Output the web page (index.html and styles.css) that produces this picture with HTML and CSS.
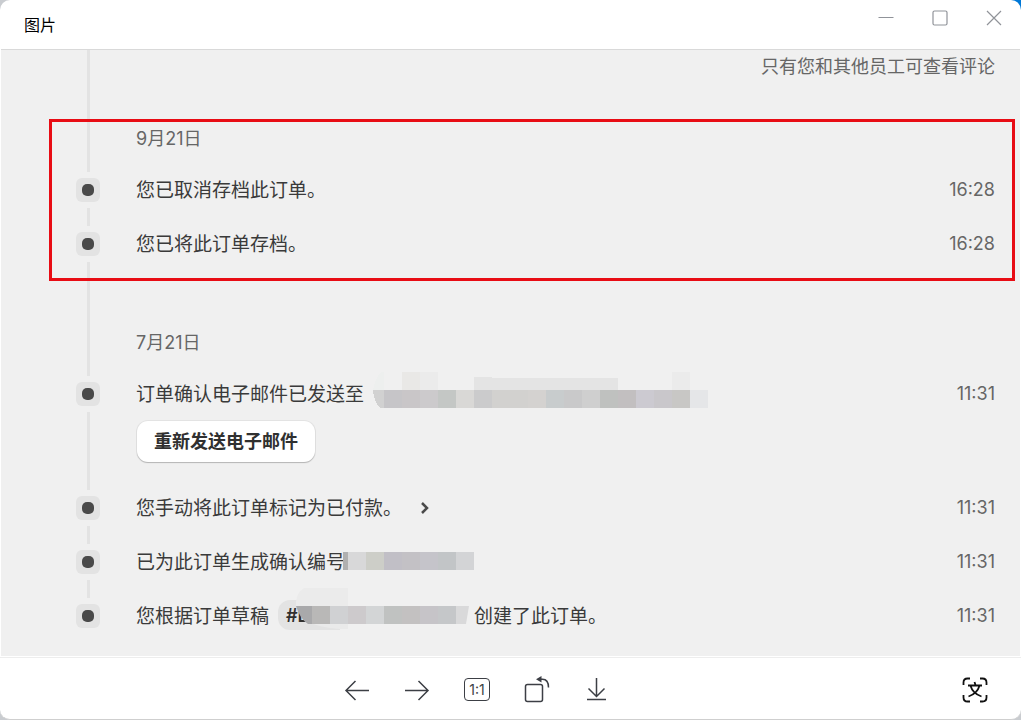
FILE: index.html
```html
<!DOCTYPE html>
<html lang="zh-CN">
<head>
<meta charset="UTF-8">
<meta name="viewport" content="width=device-width, initial-scale=1.0">
<title>图片</title>
<link rel="stylesheet" href="styles.css">
</head>
<body>

<div class="window">
  <header class="titlebar">
    <h1>图片</h1>
    <div class="window-controls">
      <button type="button" aria-label="最小化">
        <svg width="16" height="16" viewBox="0 0 16 16"><path d="M0.500 7.500h15"/></svg>
      </button>
      <button type="button" aria-label="最大化">
        <svg width="16" height="16" viewBox="0 0 16 16"><rect x="1" y="1" width="14" height="14" rx="1.500"/></svg>
      </button>
      <button type="button" aria-label="关闭">
        <svg width="16" height="16" viewBox="0 0 16 16"><path d="M1 1l14 14M15 1L1 15"/></svg>
      </button>
    </div>
  </header>

  <main class="stage">
    <div class="row note">
      <div class="rail"><i class="line"></i></div>
      <p>只有您和其他员工可查看评论</p>
    </div>

    <!-- 9月21日 -->
    <section class="day marked">
      <div class="row date">
        <div class="rail"><i class="line"></i></div>
        <h2>9月21日</h2>
      </div>
      <div class="row event">
        <div class="rail"><i class="dot"></i><i class="line"></i></div>
        <p>您已取消存档此订单。</p>
        <time>16:28</time>
      </div>
      <div class="row event last">
        <div class="rail"><i class="dot"></i><i class="line"></i></div>
        <p>您已将此订单存档。</p>
        <time>16:28</time>
      </div>
    </section>

    <!-- 7月21日 -->
    <section class="day">
      <div class="row date">
        <div class="rail"><i class="line"></i></div>
        <h2>7月21日</h2>
      </div>
      <div class="row event">
        <div class="rail"><i class="dot"></i><i class="line"></i></div>
        <div class="body">
          <p>订单确认电子邮件已发送至</p>
          <svg class="mosaic mosaic-mail" width="335" height="36" viewBox="373 372 335 36" shape-rendering="crispEdges">
            <path fill="#edefee" d="M384 372v18h-11q2-12 8-18z"/>
            <path fill="#e9e8e6" d="M402 372h18v18h-18z"/>
            <path fill="#ebebeb" d="M420 372h18v18h-18zM672 372h18v18h-18z"/>
            <path fill="#e4e4e4" d="M474 377l36 1h108v12H474z"/>
            <path fill="#d1d1d1" d="M373 390h11v18h-4q-6-6-7-18z"/>
            <path fill="#c6c5c8" d="M384 390h18v18h-18z"/>
            <path fill="#c9c6c8" d="M402 390h18v18h-18z"/>
            <path fill="#cccacc" d="M420 390h18v18h-18z"/>
            <path fill="#c4c7c5" d="M438 390h18v18h-18z"/>
            <path fill="#d9d8d6" d="M456 390h18v18h-18z"/>
            <path fill="#cbcbcc" d="M474 390h18v18h-18z"/>
            <path fill="#d2d1cf" d="M492 390h36v18h-36z"/>
            <path fill="#d4d2d0" d="M528 390h18v18h-18z"/>
            <path fill="#c8cccd" d="M546 390h18v18h-18z"/>
            <path fill="#c9c9ca" d="M564 390h18v18h-18z"/>
            <path fill="#cfcfcf" d="M582 390h18v18h-18z"/>
            <path fill="#bfc1bf" d="M600 390h18v18h-18z"/>
            <path fill="#c2bfc0" d="M618 390h18v18h-18z"/>
            <path fill="#cccad1" d="M636 390h18v18h-18z"/>
            <path fill="#c9c7cb" d="M654 390h18v18h-18z"/>
            <path fill="#c8c7c5" d="M672 390h18v18h-18z"/>
            <path fill="#e5e6e8" d="M690 390h18v18h-18z"/>
          </svg>
          <button type="button" class="resend">重新发送电子邮件</button>
        </div>
        <time>11:31</time>
      </div>
      <div class="row event">
        <div class="rail"><i class="dot"></i><i class="line"></i></div>
        <div class="body inline">
          <p>您手动将此订单标记为已付款。</p>
          <button type="button" class="expand" aria-label="展开">
            <svg width="10" height="14" viewBox="0 0 10 14"><path d="M2 2l5 5-5 5"/></svg>
          </button>
        </div>
        <time>11:31</time>
      </div>
      <div class="row event">
        <div class="rail"><i class="dot"></i><i class="line"></i></div>
        <div class="body">
          <p>已为此订单生成确认编号</p>
          <svg class="mosaic mosaic-code" width="131" height="18" viewBox="343 552 131 18" shape-rendering="crispEdges">
            <path fill="#b0b0b0" d="M343 552h5v18h-5z"/>
            <path fill="#d8d8d9" d="M348 552h18v18h-18z"/>
            <path fill="#cdcec8" d="M366 552h18v18h-18z"/>
            <path fill="#c1bfc6" d="M384 552h18v18h-18z"/>
            <path fill="#c3c1c5" d="M402 552h18v18h-18z"/>
            <path fill="#c5c4ca" d="M420 552h18v18h-18z"/>
            <path fill="#c2c5c7" d="M438 552h18v18h-18z"/>
            <path fill="#d3d4d6" d="M456 552h18v18h-18z"/>
          </svg>
        </div>
        <time>11:31</time>
      </div>
      <div class="row event end">
        <div class="rail"><i class="dot"></i></div>
        <div class="body inline">
          <p>您根据订单草稿</p>
          <a href="#" class="tag">#D
            <svg class="mosaic mosaic-draft" width="173" height="42" viewBox="296 588 173 42">
              <path fill="#f0f0f0" d="M340 600h129v30H340z"/>
              <path fill="#ebebeb" d="M348 588v18h-52q-1-12 8-18z"/>
              <path fill="#eaeaea" d="M306 620q12 8 34 9h8v-9z"/>
              <path fill="#a9a9ab" d="M296 606h16v18h-4q-8-5-12-18z"/>
              <g shape-rendering="crispEdges">
                <path fill="#b9b8b7" d="M312 606h18v18h-18z"/>
                <path fill="#d0d1d3" d="M330 606h18v18h-18z"/>
                <path fill="#cdcacc" d="M348 606h18v18h-18z"/>
                <path fill="#d3d5d6" d="M366 606h18v18h-18z"/>
                <path fill="#c0c2c1" d="M384 606h18v18h-18z"/>
                <path fill="#c3c1c1" d="M402 606h18v18h-18z"/>
                <path fill="#c6c4c8" d="M420 606h18v18h-18z"/>
                <path fill="#c5c7c9" d="M438 606h18v18h-18z"/>
              </g>
              <path fill="#d9d9da" d="M456 606h13l-3 18h-10z"/>
            </svg>
          </a>
          <p>创建了此订单。</p>
        </div>
        <time>11:31</time>
      </div>
    </section>
  </main>

  <footer class="toolbar">
    <div class="tools">
      <button type="button" aria-label="上一张">
        <svg width="28" height="28" viewBox="0 0 28 28"><path d="M26 14.500H3M12.500 5L3 14.500l9.500 9.500"/></svg>
      </button>
      <button type="button" aria-label="下一张">
        <svg width="28" height="28" viewBox="0 0 28 28"><path d="M2 14.500h23M15.500 5l9.500 9.500-9.500 9.500"/></svg>
      </button>
      <button type="button" class="actual" aria-label="原始大小"><span>1:1</span></button>
      <button type="button" aria-label="旋转">
        <svg width="28" height="28" viewBox="0 0 28 28">
          <rect x="2.500" y="8.500" width="17" height="17" rx="2"/>
          <path d="M17 3.200h2.500c4 0 6 3 6 8.300"/>
          <path class="solid" d="M13 3.200L18.500 0v6.400z"/>
        </svg>
      </button>
      <button type="button" aria-label="下载">
        <svg width="28" height="28" viewBox="0 0 28 28"><path d="M13.500 2v18.500M5.500 12.500l8 8 8-8M4 23.500h19"/></svg>
      </button>
    </div>
    <button type="button" class="translate" aria-label="提取文字">
      <svg width="26" height="26" viewBox="0 0 26 26">
        <path d="M1.500 8V5.500q0-4 4-4H8M18 1.500h2.500q4 0 4 4V8M24.500 18v2.500q0 4-4 4H18M8 24.500H5.500q-4 0-4-4V18"/>
        <path d="M12.500 5l1 3M6 8.500h14M8.500 8.800c1.500 5 5 8.700 11 10.700M17.500 8.800c-1.500 5-5 8.700-11 10.700"/>
      </svg>
    </button>
  </footer>
</div>

</body>
</html>
```

FILE: styles.css
```css
* {
  box-sizing: border-box;
}
body {
  margin: 0;
  background: linear-gradient(225deg, #0078d7 12px, #c9ccd0 12px);
  font-family: Inter, "Noto Sans CJK SC", sans-serif;
  color: #3a3a3a;
}
h1, h2, p {
  margin: 0;
  font-weight: 400;
}
button {
  padding: 0;
  border: none;
  background: none;
  font-family: inherit;
  cursor: pointer;
}
svg {
  display: block;
  fill: none;
}

.window {
  display: flex;
  flex-direction: column;
  min-height: 100vh;
  background: #fff;
  border-bottom: 1px solid #cfcfcf;
  border-radius: 10px;
  overflow: hidden;
}

/* 标题栏 */
.titlebar {
  display: flex;
  justify-content: space-between;
  height: 49px;
  padding: 0 19px 0 24px;
}
.titlebar h1 {
  font-size: 16px;
  line-height: 50px;
  color: #000;
}
.window-controls {
  display: flex;
  gap: 38px;
  padding-top: 10px;
}
.window-controls button {
  width: 16px;
  height: 16px;
}
.window-controls svg {
  stroke: #909399;
  stroke-width: 1.2;
}

/* 图片区域 */
.stage {
  flex: 1;
  margin: 0 1px;
  padding: 0 25px 28px 75px;
  background: #f0f0f0;
  border-top: 1px solid #d9d9d9;
}
.row {
  display: grid;
  grid-template-columns: 24px 1fr auto;
  column-gap: 36px;
}
.rail {
  display: flex;
  flex-direction: column;
  align-items: center;
}
.line {
  flex: 1;
  width: 3px;
  background: #e3e3e3;
}
.dot {
  display: flex;
  align-items: center;
  justify-content: center;
  width: 24px;
  height: 24px;
  border-radius: 6px;
  background: #e3e3e3;
}
.dot::before {
  content: "";
  width: 12px;
  height: 12px;
  border-radius: 5px;
  background: #4a4a4a;
}

.note {
  height: 70px;
}
.note p {
  grid-column: 2 / 4;
  text-align: right;
  font-size: 18px;
  line-height: 34px;
  color: #666;
}
.day {
  position: relative;
}
/* 红框标注 */
.marked::after {
  content: "";
  position: absolute;
  top: -1px;
  right: -20px;
  bottom: 43px;
  left: -27px;
  border: 3px solid #e80c14;
}
.date {
  height: 58px;
}
.date .line {
  margin-bottom: 6px;
}
.date h2 {
  font-size: 18px;
  line-height: 38px;
  color: #666;
}
.event {
  min-height: 54px;
  font-size: 19px;
  line-height: 24px;
}
.event p {
  line-height: 26px;
}
.event .line {
  margin: 6px 0;
}
.event.last {
  min-height: 92px;
}
.event.last .line {
  margin-bottom: 0;
}
.event.end {
  min-height: 24px;
}
.event time {
  font-size: 18px;
  color: #666;
}
.body {
  position: relative;
}
.resend {
  display: block;
  height: 41px;
  margin: 13px 0 34px 1px;
  padding: 0 17px 3px;
  border-radius: 11px;
  background: #fff;
  box-shadow: 0 1px 1px #b5b5b5, 0 0 0 1px #e3e3e3;
  font-size: 18px;
  font-weight: 700;
  color: #303030;
}
.inline {
  display: flex;
  align-items: flex-start;
  height: 24px;
}
.expand {
  margin: 5px 0 0 18px;
}
.expand svg {
  stroke: #4a4a4a;
  stroke-width: 2.5;
}
.tag {
  position: relative;
  width: 191px;
  height: 30px;
  margin: -4px 5px 0 9px;
  padding-left: 8px;
  border-radius: 12px;
  background: #e3e3e3;
  font-size: 18px;
  font-weight: 600;
  line-height: 32px;
  color: #303030;
  text-decoration: none;
}

/* 马赛克 */
.mosaic {
  position: absolute;
}
.mosaic-mail {
  top: -10px;
  left: 237px;
}
.mosaic-code {
  top: 2px;
  left: 207px;
}
.mosaic-draft {
  top: -12px;
  right: 0;
}

/* 底部工具栏 */
.toolbar {
  display: flex;
  align-items: center;
  height: 62px;
  margin-top: 1px;
  padding: 2px 25px 0 0;
  border-top: 1px solid #ededed;
}
.tools {
  flex: 1;
  display: flex;
  justify-content: center;
  gap: 24px;
}
.toolbar button {
  display: flex;
  align-items: center;
  justify-content: center;
  width: 36px;
  height: 36px;
}
.toolbar svg {
  stroke: #3c3f45;
  stroke-width: 1.5;
}
.toolbar .solid {
  fill: #3c3f45;
  stroke: none;
}
.actual span {
  width: 26px;
  height: 23px;
  border: 1px solid #3c3f45;
  border-radius: 4px;
  font-size: 14px;
  line-height: 21px;
  color: #3c3f45;
}
.toolbar .translate {
  width: 42px;
}
.translate svg {
  stroke: #111;
  stroke-width: 1.8;
}
```
